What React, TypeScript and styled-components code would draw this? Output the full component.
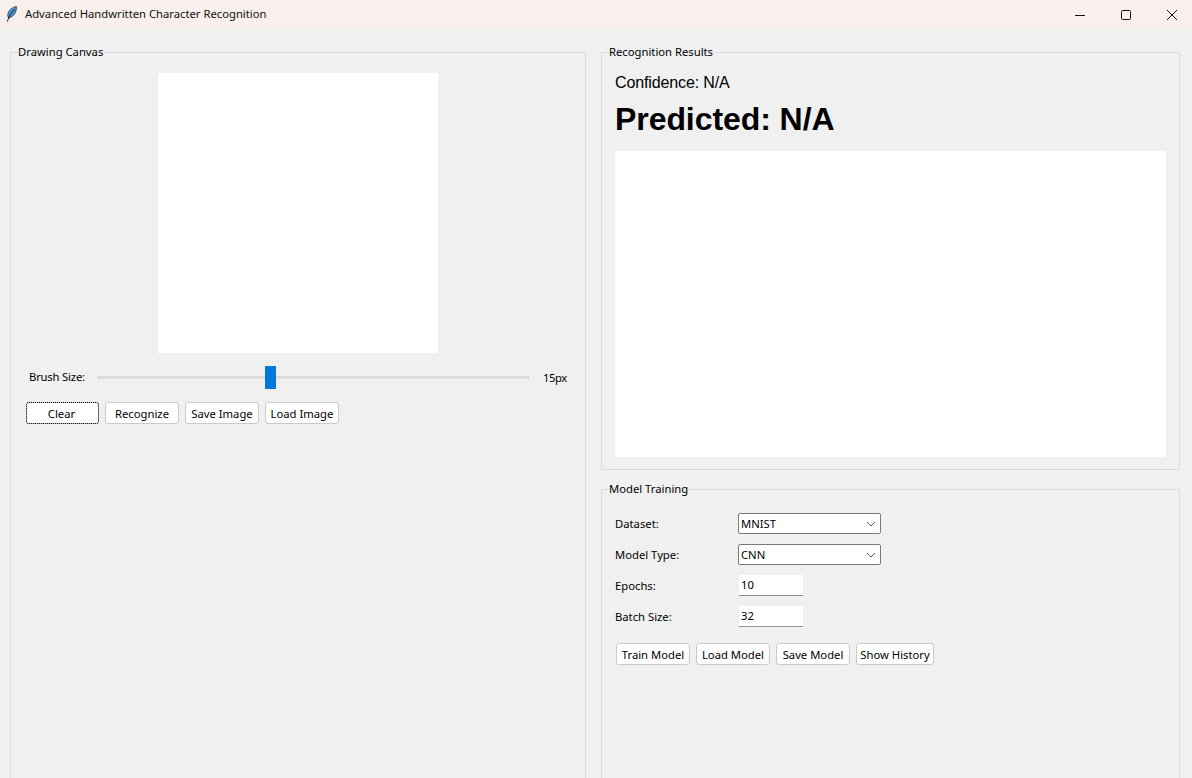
import React from 'react';
import styled, { createGlobalStyle } from 'styled-components';

const GlobalStyle = createGlobalStyle`
  html, body {
    margin: 0;
    padding: 0;
    height: 100%;
    overflow: hidden;
    background: #f0f0f0;
  }
  * {
    box-sizing: border-box;
  }
`;

const UI_FONT = `"Noto Sans", "Open Sans", sans-serif`;

export default function App() {
  const brushButtons = ['Recognize', 'Save Image', 'Load Image'];
  const modelButtons = ['Train Model', 'Load Model', 'Save Model'];

  return (
    <Window>
      <GlobalStyle />
      <TitleBar>
        <Feather viewBox="0 0 11 16">
          <path d="M10.4 0.4C7 1 3 3.6 2 7.2 1.5 9.2 1.8 10.8 2.6 12 5 11.6 7.4 10 8.8 7.6 10 5.4 10.7 2.8 10.4 0.4Z" fill="#4d94d0" stroke="#1b2b3c" strokeWidth="0.7" />
          <path d="M8.4 3.2C5.8 6 3 10.4 1.2 15.6" fill="none" stroke="#0c1218" strokeWidth="0.9" />
        </Feather>
        <TitleText>Advanced Handwritten Character Recognition</TitleText>
        <WindowControls>
          <svg width="12" height="12" viewBox="0 0 12 12"><path d="M1 6.5H11" stroke="#111" strokeWidth="1" /></svg>
          <svg width="12" height="12" viewBox="0 0 12 12"><rect x="1.5" y="1.5" width="9" height="9" rx="1" fill="none" stroke="#111" strokeWidth="1" /></svg>
          <svg width="12" height="12" viewBox="0 0 12 12"><path d="M1 1L11 11M11 1L1 11" stroke="#111" strokeWidth="1" /></svg>
        </WindowControls>
      </TitleBar>

      <Main>
        <DrawingFrame>
          <FrameLabel>Drawing Canvas</FrameLabel>
          <DrawingCanvas />
          <BrushRow>
            <BrushLabel>Brush Size:</BrushLabel>
            <SliderTrack>
              <SliderThumb />
            </SliderTrack>
            <BrushValue>15px</BrushValue>
          </BrushRow>
          <DrawingButtons>
            <ActionButton $focused>Clear</ActionButton>
            {brushButtons.map((label) => (
              <ActionButton key={label}>{label}</ActionButton>
            ))}
          </DrawingButtons>
        </DrawingFrame>

        <RightColumn>
          <ResultsFrame>
            <FrameLabel>Recognition Results</FrameLabel>
            <ResultsBody>
              <Confidence>Confidence: N/A</Confidence>
              <Predicted>Predicted: N/A</Predicted>
              <ChartArea />
            </ResultsBody>
          </ResultsFrame>

          <TrainingFrame>
            <FrameLabel>Model Training</FrameLabel>
            <TrainingForm>
              <FieldLabel>Dataset:</FieldLabel>
              <ComboBox>
                MNIST
                <ComboArrow viewBox="0 0 10 6"><path d="M1 1L5 5L9 1" fill="none" stroke="#555" strokeWidth="1" /></ComboArrow>
              </ComboBox>
              <FieldLabel>Model Type:</FieldLabel>
              <ComboBox>
                CNN
                <ComboArrow viewBox="0 0 10 6"><path d="M1 1L5 5L9 1" fill="none" stroke="#555" strokeWidth="1" /></ComboArrow>
              </ComboBox>
              <FieldLabel>Epochs:</FieldLabel>
              <EntryBox>10</EntryBox>
              <FieldLabel>Batch Size:</FieldLabel>
              <EntryBox>32</EntryBox>
            </TrainingForm>
            <TrainingButtons>
              {modelButtons.map((label) => (
                <ActionButton key={label}>{label}</ActionButton>
              ))}
              <ActionButton $wide>Show History</ActionButton>
            </TrainingButtons>
          </TrainingFrame>
        </RightColumn>
      </Main>
    </Window>
  );
}

const Window = styled.div`
  width: 1192px;
  height: 778px;
  overflow: hidden;
  background: #f0f0f0;
  color: #000;
  font-family: ${UI_FONT};
  font-size: 11.25px;
`;

const TitleBar = styled.div`
  height: 29px;
  background: #f9f0ee;
  display: flex;
  align-items: center;
  padding-left: 6px;
`;

const Feather = styled.svg`
  width: 11px;
  height: 16px;
  margin: 0 8px 2px 0;
`;

const TitleText = styled.span`
  margin-bottom: 2px;
  font-size: 11.25px;
  color: #111;
`;

const WindowControls = styled.div`
  margin-left: auto;
  display: flex;
  gap: 34px;
  padding-right: 14px;
  svg {
    display: block;
  }
`;

const Main = styled.div`
  display: grid;
  grid-template-columns: 576px 579px;
  column-gap: 15px;
  padding: 15px 0 0 10px;
`;

const Frame = styled.fieldset`
  margin: 0;
  padding: 0;
  min-width: 0;
  border: 1px solid #dcdcdc;
`;

const FrameLabel = styled.legend`
  margin-left: 7px;
  padding: 0;
  height: 16px;
  line-height: 16px;
  font-size: 11.25px;
`;

const DrawingFrame = styled(Frame)`
  height: 800px;
`;

const DrawingCanvas = styled.div`
  width: 280px;
  height: 280px;
  margin: 13px auto 0;
  background: #fff;
`;

const BrushRow = styled.div`
  display: flex;
  align-items: center;
  height: 24px;
  margin: 12px 0 0 18px;
`;

const FieldLabel = styled.span`
  line-height: 16px;
`;

const BrushLabel = styled(FieldLabel)`
  width: 68px;
  letter-spacing: -0.18px;
`;

const SliderTrack = styled.div`
  position: relative;
  width: 432px;
  height: 3px;
  background: #e2e2e2;
  border: 1px solid #d8d8d8;
`;

const SliderThumb = styled.div`
  position: absolute;
  left: 167px;
  top: -11px;
  width: 11px;
  height: 23px;
  background: #0078d7;
`;

const BrushValue = styled.span`
  margin-left: 14px;
  letter-spacing: -0.4px;
`;

const DrawingButtons = styled.div`
  display: flex;
  gap: 6px;
  margin: 13px 0 0 15px;
`;

const ActionButton = styled.button<{ $focused?: boolean; $wide?: boolean }>`
  width: ${(p) => (p.$wide ? '78px' : p.$focused ? '73px' : '74px')};
  height: 22px;
  padding: ${(p) => (p.$focused ? '0 2px 0 0' : '0')};
  background: #fff;
  border: 1px solid #cacaca;
  border-radius: 3px;
  font-family: ${UI_FONT};
  font-size: 11.25px;
  color: #000;
  outline: ${(p) => (p.$focused ? '1px dotted #000' : 'none')};
  outline-offset: -1px;
`;

const RightColumn = styled.div`
  display: flex;
  flex-direction: column;
  gap: 11px;
`;

const ResultsFrame = styled(Frame)`
  height: 426px;
`;

const ResultsBody = styled.div`
  padding: 13px 13px 0;
`;

const Confidence = styled.div`
  font-family: "Liberation Sans", Arial, sans-serif;
  font-size: 16px;
  line-height: 20px;
  letter-spacing: -0.13px;
`;

const Predicted = styled.div`
  margin-top: 7px;
  font-family: "Liberation Sans", Arial, sans-serif;
  font-size: 32px;
  font-weight: 700;
  line-height: 38px;
  letter-spacing: -0.07px;
`;

const ChartArea = styled.div`
  height: 306px;
  margin-top: 13px;
  background: #fff;
`;

const TrainingFrame = styled(Frame)`
  height: 320px;
`;

const TrainingForm = styled.div`
  display: grid;
  grid-template-columns: 123px 143px;
  grid-auto-rows: 21px;
  row-gap: 10px;
  align-items: center;
  margin: 16px 0 0 13px;
`;

const ComboBox = styled.div`
  height: 21px;
  display: flex;
  align-items: center;
  justify-content: space-between;
  padding: 0 4px 0 2px;
  background: #fff;
  border: 1px solid #7a7a7a;
  border-radius: 2px;
`;

const ComboArrow = styled.svg`
  width: 10px;
  height: 6px;
`;

const EntryBox = styled.div`
  width: 64px;
  height: 21px;
  margin-left: 1px;
  padding-left: 2px;
  line-height: 20px;
  background: #fff;
  border-bottom: 1px solid #8f8f8f;
`;

const TrainingButtons = styled.div`
  display: flex;
  gap: 6px;
  margin: 16px 0 0 14px;
`;
